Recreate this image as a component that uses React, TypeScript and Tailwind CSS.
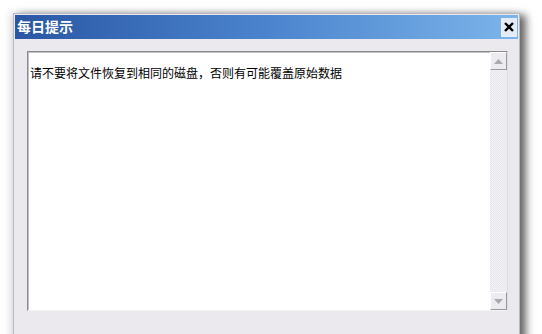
import React from 'react';

const cjk = { fontFamily: '"Liberation Sans", "Noto Sans CJK SC", sans-serif' };

function ScrollButton({ dir }: { dir: 'up' | 'down' }) {
  return (
    <div className="flex h-[18px] w-[17px] items-center justify-center border border-t-white border-l-white border-r-[#9a9a9a] border-b-[#9a9a9a] bg-[#ecebef]">
      <svg width="9" height="5" viewBox="0 0 9 5">
        {dir === 'up' ? (
          <polygon points="0,5 9,5 4.5,0" fill="#a9a9b0" />
        ) : (
          <polygon points="0,0 9,0 4.5,5" fill="#a9a9b0" />
        )}
      </svg>
    </div>
  );
}

export default function App() {
  return (
    <div className="h-[334px] w-[542px] overflow-hidden bg-white pl-[13px] pt-[13px]" style={cjk}>
      <div className="h-[340px] w-[507px] border border-[#b8b8c0] bg-[#ebe9ee] p-[1px] shadow-[6px_2px_8px_rgba(0,0,0,0.6),-3px_0_8px_rgba(0,0,0,0.12)]">
        {/* title bar */}
        <div className="flex h-[24px] items-center justify-between bg-gradient-to-r from-[#2a57a4] via-[#4b84cd] to-[#7cb4ea] pl-[2px] pr-[1px]">
          <span className="text-[14px] font-bold leading-none text-white">每日提示</span>
          <div className="flex h-[19px] w-[16px] items-center justify-center border border-[#e8eef8] bg-[#e4ebf5]">
            <svg width="10" height="10" viewBox="0 0 10 10">
              <path d="M1 1 L9 9 M9 1 L1 9" stroke="#000" strokeWidth="2.4" />
            </svg>
          </div>
        </div>

        {/* content */}
        <div className="pl-[12px] pr-[10px] pt-[12px]">
          <div className="flex h-[260px] border border-t-[#8a8a8a] border-l-[#8a8a8a] border-r-[#dcdce0] border-b-[#f4f4f6] bg-white shadow-[inset_1px_1px_0_#c0c0c8]">
            <div className="flex-1 pl-[2px] pt-[15px] text-[12px] leading-[14px] text-black">
              请不要将文件恢复到相同的磁盘，否则有可能覆盖原始数据
            </div>
            <div className="flex w-[17px] flex-col justify-between bg-[repeating-conic-gradient(#f4f4f6_0%_25%,#e6e6ea_0%_50%)] bg-[length:2px_2px]">
              <ScrollButton dir="up" />
              <ScrollButton dir="down" />
            </div>
          </div>
        </div>
      </div>
    </div>
  );
}
